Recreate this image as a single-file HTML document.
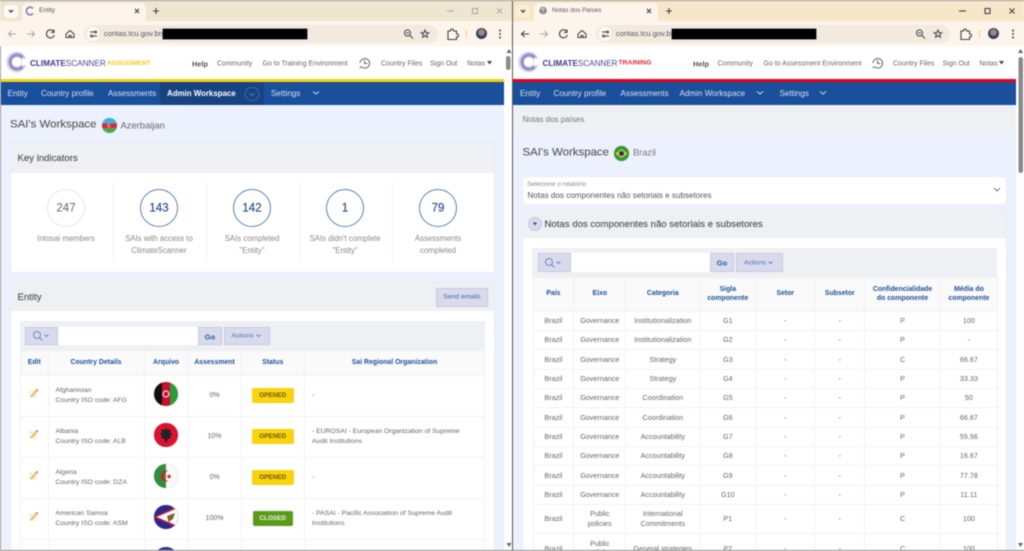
<!DOCTYPE html>
<html lang="en"><head><meta charset="utf-8"><title>ClimateScanner</title>
<style>
html,body{margin:0;padding:0;width:1024px;height:551px;overflow:hidden;background:#fff}
#w{position:absolute;left:0;top:0;width:1024px;height:551px;overflow:hidden;font-family:"Liberation Sans",sans-serif;color:#666;filter:blur(.4px)}
.b{position:absolute}
.t{position:absolute;white-space:nowrap;line-height:1;transform:translateY(-50%)}
.c{position:absolute;white-space:nowrap;line-height:1;transform:translate(-50%,-50%);text-align:center}
svg{position:absolute;overflow:visible}
.h{font-size:7px;color:#666}
.n{font-size:8.1px;color:#d6e0f2}
.flag{position:absolute;border-radius:50%;overflow:hidden;box-shadow:0 0 1px #999}
.sb{position:absolute;background:#d9dbed;border:1px solid #c6c9e2;box-sizing:border-box}
.lab{font-size:7.8px;color:#888}
.num{font-size:11.5px;color:#2a4f8e;-webkit-text-stroke:.2px #2a4f8e}
table{position:absolute;border-collapse:collapse;table-layout:fixed;font-size:7.2px;color:#666;background:#fff}
td,th{border:1px solid #f1f1f3;padding:0;text-align:center;line-height:9.6px;overflow:hidden}
th{background:#fafafb;color:#1f5199;font-weight:bold;font-size:6.9px}
.tl td{text-align:left;padding-left:7px;font-size:6.8px}
.tl td.m,.tl th{text-align:center;padding-left:0}
.tl td.m{font-size:7px}
.bd{display:inline-block;width:42px;height:15px;line-height:15px;background:#f8d30e;color:#6b5a10;font-weight:bold;font-size:6.4px;border-radius:2px}
.bd.g{background:#5b9a1a;color:#eef5e2;width:40px}
</style></head><body><div id="w">

<!-- LEFT WINDOW -->
<div class="b" style="left:0;top:0;width:512px;height:551px;background:#edf1fd"></div>
<div class="b" style="left:0;top:0;width:512px;height:21px;background:#efe6d1"></div>
<div class="b" style="left:0;top:21px;width:512px;height:25px;background:#fdf5ec"></div>
<div class="b" style="left:22px;top:3px;width:124px;height:18px;background:#fdf5ec;border-radius:6px 6px 0 0"></div>
<div class="b" style="left:4px;top:5px;width:14px;height:13px;background:#fdfaf5;border-radius:4px"></div>
<svg style="left:0;top:0" width="512" height="46" fill="none" stroke="#444" stroke-width="1.1">
<path d="M9 10l2 2 2-2" stroke-width="1.4"/>
<path d="M33 8.500a3.800 3.800 0 1 0 0 5" stroke="#8a86c8" stroke-width="1.800"/>
<path d="M135 9l4 4M139 9l-4 4" stroke-width="1.2"/><path d="M156 8v6M153 11h6" stroke-width="1.1"/>
<path d="M447 11h7" stroke="#aaa"/><rect x="472.500" y="8.500" width="5" height="5" stroke="#aaa"/><path d="M497 8.500l5 5M502 8.500l-5 5" stroke="#aaa"/>
<path d="M16 34H8.500M11.500 31l-3 3 3 3" stroke="#aaa"/><path d="M27 34h7.500M31.500 31l3 3-3 3" stroke="#aaa"/>
<path d="M54 32a4 4 0 1 0 .3 3M54 29.500V32.500H51"/><path d="M66 34l4-3.500 4 3.500v3.500h-8zM69 37.500v-2h2v2"/>
</svg>
<div class="b" style="left:84px;top:25px;width:354px;height:18px;background:#f2e9df;border-radius:9px"></div>
<div class="b" style="left:87px;top:27px;width:12px;height:14px;background:#fdfaf5;border-radius:7px"></div>
<svg style="left:0;top:0" width="512" height="46" fill="none" stroke="#444" stroke-width="1">
<path d="M90 32h4M93 36h4"/><circle cx="95.500" cy="32" r="1"/><circle cx="91.500" cy="36" r="1"/>
<circle cx="407.500" cy="33" r="3"/><path d="M410 35.500l3 3M406 33h3"/>
<path d="M425 30l1 2.600 2.800.2-2.200 1.700.8 2.700-2.400-1.500-2.400 1.500.8-2.700-2.200-1.700 2.800-.2z"/>
<path d="M448 31h2.500v-.5a1.500 1.500 0 0 1 3 0v.5h3v3h.5a1.500 1.500 0 0 1 0 3h-.5v2.500h-8.500z" stroke-width="1.100"/>
<path d="M466.500 30v8" stroke="#f3cf80"/>
<circle cx="500" cy="30.500" r=".5"/><circle cx="500" cy="34" r=".5"/><circle cx="500" cy="37.500" r=".5"/>
</svg>
<div class="b" style="left:476px;top:28px;width:11px;height:11px;border-radius:50%;background:radial-gradient(circle at 50% 40%,#a08a7c 0 28%,#2c3c58 52%)"></div>
<div class="t" style="left:39px;top:11px;font-size:6.400px;color:#555">Entity</div>
<div class="t" style="left:104px;top:34px;font-size:7.600px;color:#555">contas.tcu.gov.br/</div>
<div class="b" style="left:162.500px;top:29px;width:144px;height:10px;background:#000;box-shadow:0 0 0 .5px #2c4060"></div>

<div class="b" style="left:1px;top:46px;width:503px;height:33px;background:#fff"></div>
<div class="b" style="left:504px;top:46px;width:8px;height:505px;background:#fff"></div>
<svg style="left:0;top:46px" width="40" height="33" fill="none"><circle cx="16.500" cy="16" r="10.500" fill="#dcdbee"/><circle cx="16.500" cy="16" r="5" fill="#fff"/><path d="M22.500 11.500a7 7 0 1 0 0 9" stroke="#9693c8" stroke-width="3.500"/><path d="M22 16h6" stroke="#fff" stroke-width="6"/></svg>
<div class="t" style="left:30px;top:63.500px;font-size:8.200px;font-weight:bold;color:#3c3a8e">CLIMATE<span style="font-weight:normal;color:#48468f">SCANNER</span></div>
<div class="t" style="left:107px;top:63.500px;font-size:6.300px;font-weight:bold;color:#f6cb1a">ASSESSMENT</div>
<div class="t h" style="left:192px;top:63.500px;font-weight:bold;color:#555;font-size:7.400px">Help</div>
<div class="t h" style="left:217px;top:63.500px">Community</div>
<div class="t h" style="left:262.500px;top:63.500px">Go to Training Environment</div>
<svg style="left:0;top:46px" width="512" height="33" fill="none" stroke="#666"><path d="M360 17a4.800 4.800 0 1 1 1.500 3.800l-2 1"/><path d="M364.500 14v3.500h3"/></svg>
<div class="t h" style="left:381px;top:63.500px">Country Files</div>
<div class="t h" style="left:430px;top:63.500px">Sign Out</div>
<div class="t h" style="left:467px;top:63.500px">Notas</div>
<svg style="left:0;top:46px" width="512" height="33"><path d="M487 15h5l-2.500 3.500z" fill="#444"/></svg>
<div class="b" style="left:1px;top:79px;width:503px;height:2.500px;background:#f9cf0c"></div>
<div class="b" style="left:1px;top:81.500px;width:503px;height:23.500px;background:#1a4f9c"></div>
<div class="b" style="left:160px;top:81.500px;width:104px;height:23.500px;background:#174480"></div>
<div class="t n" style="left:7.500px;top:94px">Entity</div>
<div class="t n" style="left:41px;top:94px">Country profile</div>
<div class="t n" style="left:108px;top:94px">Assessments</div>
<div class="t n" style="left:167px;top:94px;font-weight:bold;color:#fff;font-size:7.900px">Admin Workspace</div>
<div class="t n" style="left:271px;top:94px">Settings</div>
<svg style="left:0;top:82px" width="512" height="24" fill="none" stroke="#9cc"><circle cx="252" cy="12" r="6.800" stroke="#2f6bc0"/><path d="M249.500 11l2.500 2.500 2.500-2.500" stroke="#3d7bd0"/><path d="M313 9.500l3 2.500 3-2.500" stroke="#cdd9ee"/></svg>

<div class="t" style="left:10px;top:125px;font-size:11.450px;color:#555;-webkit-text-stroke:.1px #555">SAI's Workspace</div>
<div class="flag" style="left:101.500px;top:117.500px;width:15px;height:15px;background:linear-gradient(#37b4e6 0 35%,#e2273f 35% 66%,#4bab4a 66%)"></div>
<svg style="left:101.500px;top:117.500px" width="15" height="15"><circle cx="7.500" cy="7.500" r="1.700" fill="#fff"/><circle cx="8" cy="7.500" r="1.400" fill="#e2273f"/></svg>
<div class="t" style="left:120.500px;top:125px;font-size:9.400px;color:#666">Azerbaijan</div>

<div class="b" style="left:10.500px;top:143px;width:483.500px;height:129px;background:#fff;box-shadow:0 0 1px #d8dbe5"></div>
<div class="b" style="left:10.500px;top:143px;width:483.500px;height:30px;background:#eef0f3"></div>
<div class="t" style="left:17.500px;top:158.500px;font-size:9.600px;color:#555;-webkit-text-stroke:.15px #555">Key indicators</div>
<div class="b" style="left:113px;top:182px;width:1px;height:81px;background:#f3f3f5"></div>
<div class="b" style="left:206px;top:182px;width:1px;height:81px;background:#f3f3f5"></div>
<div class="b" style="left:299px;top:182px;width:1px;height:81px;background:#f3f3f5"></div>
<div class="b" style="left:392px;top:182px;width:1px;height:81px;background:#f3f3f5"></div>
<div class="b" style="left:47px;top:189px;width:38px;height:38px;border-radius:50%;border:.5px solid #e8e8ec;box-sizing:border-box"></div>
<div class="b" style="left:140px;top:189px;width:38px;height:38px;border-radius:50%;border:1px solid #5d82b9;box-sizing:border-box"></div>
<div class="b" style="left:233px;top:189px;width:38px;height:38px;border-radius:50%;border:1px solid #5d82b9;box-sizing:border-box"></div>
<div class="b" style="left:326px;top:189px;width:38px;height:38px;border-radius:50%;border:1px solid #5d82b9;box-sizing:border-box"></div>
<div class="b" style="left:419px;top:189px;width:38px;height:38px;border-radius:50%;border:1px solid #5d82b9;box-sizing:border-box"></div>
<div class="c" style="left:66px;top:208.500px;font-size:11.500px;color:#666">247</div>
<div class="c num" style="left:159px;top:208.500px">143</div>
<div class="c num" style="left:252px;top:208.500px">142</div>
<div class="c num" style="left:345px;top:208.500px">1</div>
<div class="c num" style="left:438px;top:208.500px">79</div>
<div class="c lab" style="left:66px;top:238.500px">Intosai members</div>
<div class="c lab" style="left:159px;top:238.500px">SAIs with access to</div>
<div class="c lab" style="left:159px;top:250.500px">ClimateScanner</div>
<div class="c lab" style="left:252px;top:238.500px">SAIs completed</div>
<div class="c lab" style="left:252px;top:250.500px">"Entity"</div>
<div class="c lab" style="left:345px;top:238.500px">SAIs didn't complete</div>
<div class="c lab" style="left:345px;top:250.500px">"Entity"</div>
<div class="c lab" style="left:438px;top:238.500px">Assessments</div>
<div class="c lab" style="left:438px;top:250.500px">completed</div>

<div class="b" style="left:10.500px;top:282px;width:483.500px;height:269px;background:#fff;box-shadow:0 0 1px #d8dbe5"></div>
<div class="b" style="left:10.500px;top:282px;width:483.500px;height:29px;background:#eef0f3"></div>
<div class="t" style="left:17.500px;top:297.500px;font-size:9.600px;color:#555;-webkit-text-stroke:.15px #555">Entity</div>
<div class="sb" style="left:436px;top:288px;width:52px;height:19px"></div>
<div class="c" style="left:462px;top:297.500px;font-size:6.800px;color:#3c6aa8">Send emails</div>
<div class="b" style="left:20px;top:321px;width:465px;height:29px;background:#eef0f3"></div>
<div class="sb" style="left:25px;top:327px;width:33px;height:18px"></div>
<div class="b" style="left:58px;top:327px;width:140px;height:18px;background:#fff"></div>
<div class="sb" style="left:198px;top:327px;width:24px;height:18px"></div>
<div class="sb" style="left:224px;top:327px;width:46px;height:18px"></div>
<div class="c" style="left:210px;top:336.500px;font-size:7.500px;font-weight:bold;color:#2a5a9e">Go</div>
<div class="c" style="left:242.500px;top:336.500px;font-size:6.800px;color:#4d74ad">Actions</div>
<svg style="left:0;top:320px" width="300" height="30" fill="none" stroke="#6a8cc0"><circle cx="37" cy="15" r="3.500"/><path d="M39.500 17.500l3 3"/><path d="M44.500 14.500l2 2 2-2M256.500 14.500l2 2 2-2"/></svg>

<table class="tl" style="left:20px;top:350px;width:464px"><colgroup><col style="width:27.500px"><col style="width:96px"><col style="width:44px"><col style="width:53px"><col style="width:63.500px"><col style="width:180px"></colgroup>
<tr style="height:24.500px"><th>Edit</th><th>Country Details</th><th>Arquivo</th><th>Assessment</th><th>Status</th><th>Sai Regional Organization</th></tr>
<tr style="height:41px"><td class="m"></td><td>Afghanistan<br>Country ISO code: AFG</td><td class="m"></td><td class="m">0%</td><td class="m"><span class="bd">OPENED</span></td><td>-</td></tr>
<tr style="height:41px"><td class="m"></td><td>Albania<br>Country ISO code: ALB</td><td class="m"></td><td class="m">10%</td><td class="m"><span class="bd">OPENED</span></td><td>- EUROSAI - European Organization of Supreme<br>Audit Institutions</td></tr>
<tr style="height:41px"><td class="m"></td><td>Algeria<br>Country ISO code: DZA</td><td class="m"></td><td class="m">0%</td><td class="m"><span class="bd">OPENED</span></td><td>-</td></tr>
<tr style="height:41.500px"><td class="m"></td><td>American Samoa<br>Country ISO code: ASM</td><td class="m"></td><td class="m">100%</td><td class="m"><span class="bd g">CLOSED</span></td><td>- PASAI - Pacific Association of Supreme Audit<br>Institutions</td></tr>
<tr style="height:30px"><td></td><td></td><td></td><td></td><td></td><td></td></tr>
</table>
<svg style="left:0;top:0" width="60" height="551" fill="none">
<g><rect x="29" y="390" width="8" height="8" fill="#f1f1f1"/><path d="M31 397l6-7" stroke="#f3b63f" stroke-width="1.800"/><path d="M36.500 390.500l1-1" stroke="#e05a3a" stroke-width="1.800"/></g>
<g transform="translate(0,41)"><rect x="29" y="390" width="8" height="8" fill="#f1f1f1"/><path d="M31 397l6-7" stroke="#f3b63f" stroke-width="1.800"/><path d="M36.500 390.500l1-1" stroke="#e05a3a" stroke-width="1.800"/></g>
<g transform="translate(0,82)"><rect x="29" y="390" width="8" height="8" fill="#f1f1f1"/><path d="M31 397l6-7" stroke="#f3b63f" stroke-width="1.800"/><path d="M36.500 390.500l1-1" stroke="#e05a3a" stroke-width="1.800"/></g>
<g transform="translate(0,123)"><rect x="29" y="390" width="8" height="8" fill="#f1f1f1"/><path d="M31 397l6-7" stroke="#f3b63f" stroke-width="1.800"/><path d="M36.500 390.500l1-1" stroke="#e05a3a" stroke-width="1.800"/></g>
</svg>
<div class="flag" style="left:154px;top:382px;width:24px;height:24px;background:linear-gradient(90deg,#111 0 33%,#c8102e 33% 66%,#2f9a3a 66%)"></div>
<svg style="left:154px;top:382px" width="24" height="24"><circle cx="12" cy="12" r="3" fill="none" stroke="#f0dede" stroke-width="1.200"/></svg>
<div class="flag" style="left:154px;top:423px;width:24px;height:24px;background:#dd1030"></div>
<svg style="left:154px;top:423px" width="24" height="24"><path d="M12 5l2 2 3-1-1 3 2 2-2 2 1 2-3 1-2 4-2-4-3-1 1-2-2-2 2-2-1-3 3 1z" fill="#222"/></svg>
<div class="flag" style="left:154px;top:464px;width:24px;height:24px;background:linear-gradient(90deg,#2c8f3d 0 50%,#fafafa 50%)"></div>
<svg style="left:154px;top:464px" width="24" height="24"><path d="M14.500 7a5.500 5.500 0 1 0 0 10 4.500 4.500 0 1 1 0-10z" fill="#d91c2e"/><path d="M15 10l.8 1.500 1.700.2-1.200 1.100.3 1.700-1.600-.8-1.500.8.300-1.700-1.200-1.100 1.700-.2z" fill="#d91c2e"/></svg>
<div class="flag" style="left:154px;top:505px;width:24px;height:24px;background:#2a2a86"></div>
<svg style="left:154px;top:505px;border-radius:50%;overflow:hidden" width="24" height="24"><path d="M0 12L24 1V23z" fill="#d5253a"/><path d="M3 12L24 3V21z" fill="#fff"/><path d="M13 11l8-3-2 6-3 2-1 2-1-3z" fill="#8a5a32"/></svg>
<div class="flag" style="left:154px;top:547px;width:24px;height:24px;background:#3a348f"></div>

<svg style="left:504px;top:46px" width="8" height="505"><path d="M5 3L2.500 7h5z" fill="#666"/><path d="M2.500 497h5L5 501z" fill="#666"/><rect x="2" y="10" width="4.500" height="14" rx="2.200" fill="#8a8a8a"/></svg>
<div class="b" style="left:0;top:46px;width:1px;height:505px;background:#999"></div>

<!-- RIGHT WINDOW -->
<div class="b" style="left:512px;top:0;width:512px;height:551px;background:#edf1fd"></div>
<div class="b" style="left:512px;top:0;width:512px;height:21px;background:#f7e7c8"></div>
<div class="b" style="left:512px;top:21px;width:512px;height:25px;background:#fdf5ec"></div>
<div class="b" style="left:534px;top:3px;width:124px;height:18px;background:#fdf5ec;border-radius:6px 6px 0 0"></div>
<div class="b" style="left:516px;top:5px;width:14px;height:13px;background:#fbeed6;border-radius:4px"></div>
<svg style="left:512px;top:0" width="512" height="46" fill="none" stroke="#444" stroke-width="1.100">
<path d="M9 10l2 2 2-2" stroke-width="1.400"/>
<circle cx="31" cy="10.500" r="3.800" fill="#888" stroke="none"/><path d="M28 9h5M31 7v6" stroke="#ddd" stroke-width=".7"/>
<path d="M135 9l4 4M139 9l-4 4" stroke-width="1.200"/><path d="M157 8v6M154 11h6"/>
<path d="M447 11h7"/><rect x="473" y="8.500" width="5" height="5"/><path d="M497.500 8.500l5 5M502.500 8.500l-5 5"/>
<path d="M17 34H9.500M12.500 31l-3 3 3 3"/><path d="M28 34h7.500M32.500 31l3 3-3 3" stroke="#aaa"/>
<path d="M55 32a4 4 0 1 0 .3 3M55 29.500V32.500H52"/><path d="M66 34l4-3.500 4 3.500v3.500h-8zM69 37.500v-2h2v2"/>
</svg>
<div class="b" style="left:596px;top:25px;width:354px;height:18px;background:#f2e9df;border-radius:9px"></div>
<div class="b" style="left:599px;top:27px;width:12px;height:14px;background:#fdfaf5;border-radius:7px"></div>
<svg style="left:512px;top:0" width="512" height="46" fill="none" stroke="#444">
<path d="M90 32h4M93 36h4"/><circle cx="95.500" cy="32" r="1"/><circle cx="91.500" cy="36" r="1"/>
<circle cx="407.500" cy="33" r="3"/><path d="M410 35.500l3 3M406 33h3"/>
<path d="M426 30l1 2.600 2.800.2-2.200 1.700.8 2.700-2.400-1.500-2.400 1.500.8-2.700-2.200-1.700 2.800-.2z"/>
<path d="M449 31h2.500v-.5a1.500 1.500 0 0 1 3 0v.5h3v3h.5a1.500 1.500 0 0 1 0 3h-.5v2.500h-8.500z" stroke-width="1.100"/>
<path d="M467.500 30v8" stroke="#f3cf80"/>
<circle cx="501" cy="30.500" r=".5"/><circle cx="501" cy="34" r=".5"/><circle cx="501" cy="37.500" r=".5"/>
</svg>
<div class="b" style="left:988px;top:28px;width:11px;height:11px;border-radius:50%;background:radial-gradient(circle at 50% 40%,#a08a7c 0 28%,#2c3c58 52%)"></div>
<div class="t" style="left:552px;top:11px;font-size:6.300px;color:#555">Notas dos Países</div>
<div class="t" style="left:616px;top:34px;font-size:7.600px;color:#555">contas.tcu.gov.br</div>
<div class="b" style="left:672px;top:29px;width:143.500px;height:10px;background:#000;box-shadow:0 0 0 .5px #2c4060"></div>

<div class="b" style="left:513px;top:46px;width:503px;height:33px;background:#fff"></div>
<div class="b" style="left:1016px;top:46px;width:8px;height:505px;background:#fff"></div>
<svg style="left:512px;top:46px" width="40" height="33" fill="none"><circle cx="16.500" cy="16" r="10.500" fill="#dcdbee"/><circle cx="16.500" cy="16" r="5" fill="#fff"/><path d="M22.500 11.500a7 7 0 1 0 0 9" stroke="#9693c8" stroke-width="3.500"/><path d="M22 16h6" stroke="#fff" stroke-width="6"/></svg>
<div class="t" style="left:542.500px;top:63.500px;font-size:8.100px;font-weight:bold;color:#3c3a8e">CLIMATE<span style="font-weight:normal;color:#48468f">SCANNER</span></div>
<div class="t" style="left:618.500px;top:63.500px;font-size:6.800px;font-weight:bold;color:#d92a3a">TRAINING</div>
<div class="t h" style="left:693px;top:63.500px;font-weight:bold;color:#555;font-size:7.400px">Help</div>
<div class="t h" style="left:717.500px;top:63.500px">Community</div>
<div class="t h" style="left:763.500px;top:63.500px">Go to Assessment Environment</div>
<svg style="left:512px;top:46px" width="512" height="33" fill="none" stroke="#666"><path d="M361 17a4.800 4.800 0 1 1 1.500 3.800l-2 1"/><path d="M365.500 14v3.500h3"/></svg>
<div class="t h" style="left:893px;top:63.500px">Country Files</div>
<div class="t h" style="left:942.500px;top:63.500px">Sign Out</div>
<div class="t h" style="left:979.500px;top:63.500px">Notas</div>
<svg style="left:512px;top:46px" width="512" height="33"><path d="M487 15h5l-2.500 3.500z" fill="#444"/></svg>
<div class="b" style="left:513px;top:79px;width:503px;height:2.500px;background:#f00014"></div>
<div class="b" style="left:513px;top:81.500px;width:503px;height:23.500px;background:#1a4f9c"></div>
<div class="t n" style="left:520px;top:94px">Entity</div>
<div class="t n" style="left:553.500px;top:94px">Country profile</div>
<div class="t n" style="left:620.500px;top:94px">Assessments</div>
<div class="t n" style="left:679.500px;top:94px">Admin Workspace</div>
<div class="t n" style="left:779.500px;top:94px">Settings</div>
<svg style="left:512px;top:82px" width="512" height="24" fill="none" stroke="#cdd9ee"><path d="M245 9.500l3 2.500 3-2.500M308 9.500l3 2.500 3-2.500"/></svg>

<div class="b" style="left:513px;top:105px;width:503px;height:28px;background:#eef0f3"></div>
<div class="t" style="left:522.500px;top:120px;font-size:8px;color:#777">Notas dos países</div>
<div class="t" style="left:522.500px;top:153px;font-size:11.450px;color:#555;-webkit-text-stroke:.1px #555">SAI's Workspace</div>
<div class="flag" style="left:613.500px;top:145.500px;width:15px;height:15px;background:#2f9a3a"></div>
<svg style="left:613.500px;top:145.500px" width="15" height="15"><path d="M7.500 3L13.500 7.500 7.500 12 1.500 7.500z" fill="#e9d21c"/><circle cx="7.500" cy="7.500" r="2.500" fill="#2a2a7c"/></svg>
<div class="t" style="left:633px;top:153px;font-size:9.200px;color:#777">Brazil</div>

<div class="b" style="left:522.500px;top:176.500px;width:483.500px;height:27.500px;background:#fff;border-radius:3px;box-shadow:0 0 1px #d0d3de"></div>
<div class="t" style="left:527px;top:184.500px;font-size:6.500px;color:#888">Selecione o relatório</div>
<div class="t" style="left:527.500px;top:196px;font-size:8.100px;color:#555">Notas dos componentes não setoriais e subsetores</div>
<svg style="left:990px;top:185px" width="14" height="10" fill="none" stroke="#777"><path d="M4 3l3 3 3-3"/></svg>

<div class="b" style="left:522.500px;top:209px;width:483.500px;height:342px;background:#fff;box-shadow:0 0 1px #d8dbe5"></div>
<div class="b" style="left:522.500px;top:209px;width:483.500px;height:29px;background:#eef0f3"></div>
<div class="b" style="left:527.500px;top:217px;width:14px;height:14px;border-radius:50%;background:#d9dbed;border:.5px solid #c6c9e2;box-sizing:border-box"></div>
<svg style="left:527.500px;top:217px" width="14" height="14"><path d="M5 5.500h4L7 8.500z" fill="#2a4f8e"/></svg>
<div class="t" style="left:544.500px;top:224.500px;font-size:9.600px;color:#555;-webkit-text-stroke:.15px #555">Notas dos componentes não setoriais e subsetores</div>

<div class="b" style="left:532px;top:248px;width:465px;height:29px;background:#eef0f3"></div>
<div class="sb" style="left:538px;top:253px;width:33px;height:19px"></div>
<div class="b" style="left:571px;top:253px;width:139px;height:19px;background:#fff"></div>
<div class="sb" style="left:710px;top:253px;width:24px;height:19px"></div>
<div class="sb" style="left:736px;top:253px;width:47px;height:19px"></div>
<div class="c" style="left:722px;top:263px;font-size:7.500px;font-weight:bold;color:#2a5a9e">Go</div>
<div class="c" style="left:755px;top:263.500px;font-size:6.800px;color:#4d74ad">Actions</div>
<svg style="left:512px;top:247px" width="300" height="30" fill="none" stroke="#6a8cc0"><circle cx="37" cy="15" r="3.500"/><path d="M39.500 17.500l3 3"/><path d="M44.500 14.500l2 2 2-2M256.500 14.500l2 2 2-2"/></svg>

<table style="left:532.500px;top:277px;width:464.500px"><colgroup><col style="width:40.800px"><col style="width:52px"><col style="width:74px"><col style="width:56px"><col style="width:59px"><col style="width:50px"><col style="width:75.500px"><col style="width:57.200px"></colgroup>
<tr style="height:33.500px"><th>País</th><th>Eixo</th><th>Categoria</th><th>Sigla<br>componente</th><th>Setor</th><th>Subsetor</th><th>Confidencialidade<br>do componente</th><th>Média do<br>componente</th></tr>
<tr style="height:19.500px"><td>Brazil</td><td>Governance</td><td>Institutionalization</td><td>G1</td><td>-</td><td>-</td><td>P</td><td>100</td></tr>
<tr style="height:19.400px"><td>Brazil</td><td>Governance</td><td>Institutionalization</td><td>G2</td><td>-</td><td>-</td><td>P</td><td>-</td></tr>
<tr style="height:19.400px"><td>Brazil</td><td>Governance</td><td>Strategy</td><td>G3</td><td>-</td><td>-</td><td>C</td><td>66.67</td></tr>
<tr style="height:19.300px"><td>Brazil</td><td>Governance</td><td>Strategy</td><td>G4</td><td>-</td><td>-</td><td>P</td><td>33.33</td></tr>
<tr style="height:19.300px"><td>Brazil</td><td>Governance</td><td>Coordination</td><td>G5</td><td>-</td><td>-</td><td>P</td><td>50</td></tr>
<tr style="height:19.300px"><td>Brazil</td><td>Governance</td><td>Coordination</td><td>G6</td><td>-</td><td>-</td><td>P</td><td>66.67</td></tr>
<tr style="height:19.300px"><td>Brazil</td><td>Governance</td><td>Accountability</td><td>G7</td><td>-</td><td>-</td><td>P</td><td>55.56</td></tr>
<tr style="height:19.300px"><td>Brazil</td><td>Governance</td><td>Accountability</td><td>G8</td><td>-</td><td>-</td><td>P</td><td>16.67</td></tr>
<tr style="height:19.300px"><td>Brazil</td><td>Governance</td><td>Accountability</td><td>G9</td><td>-</td><td>-</td><td>P</td><td>77.78</td></tr>
<tr style="height:19.300px"><td>Brazil</td><td>Governance</td><td>Accountability</td><td>G10</td><td>-</td><td>-</td><td>P</td><td>11.11</td></tr>
<tr style="height:29px"><td>Brazil</td><td>Public<br>policies</td><td>International<br>Commitments</td><td>P1</td><td>-</td><td>-</td><td>C</td><td>100</td></tr>
<tr style="height:30px"><td>Brazil</td><td>Public<br>policies</td><td>General strategies</td><td>P2</td><td>-</td><td>-</td><td>C</td><td>100</td></tr>
</table>

<svg style="left:1016px;top:46px" width="8" height="505"><path d="M4.500 3L2 7h5z" fill="#666"/><path d="M2 497h5l-2.500 4z" fill="#666"/><rect x="2.500" y="11" width="4.500" height="116" rx="2.200" fill="#8a8a8a"/></svg>
<div class="b" style="left:512px;top:0;width:1px;height:551px;background:#555"></div>
<div class="b" style="left:0;top:0;width:1024px;height:1px;background:#999"></div>
<div class="b" style="left:0;top:550px;width:1024px;height:1px;background:#888"></div>
</div></body></html>
